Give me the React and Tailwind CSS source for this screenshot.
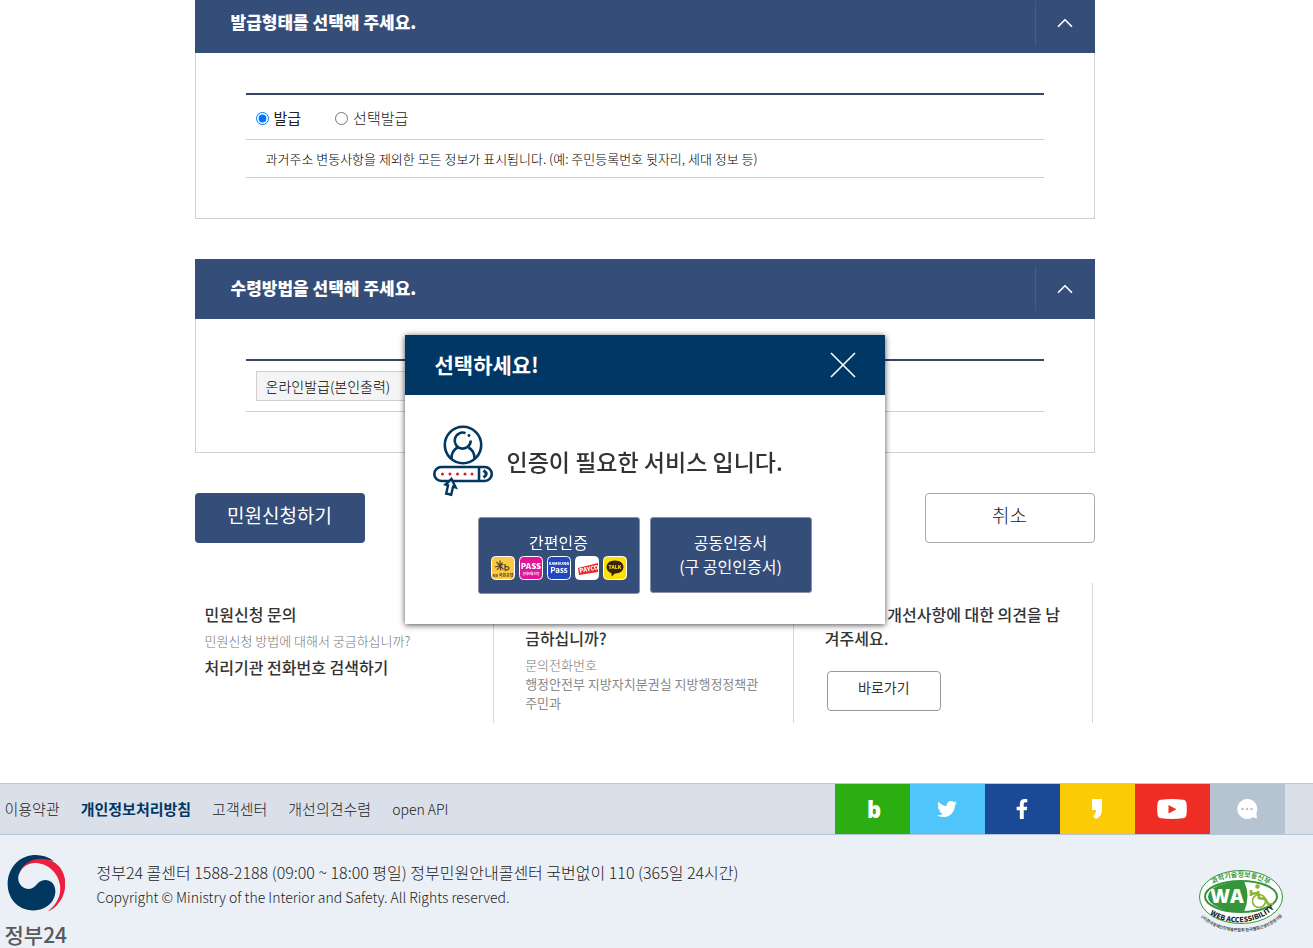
import React, { useState } from 'react';
import { FaTwitter, FaFacebookF } from 'react-icons/fa';
import { ChevronUp } from 'lucide-react';

const footerLinks = [
  { label: '이용약관' },
  { label: '개인정보처리방침', strong: true },
  { label: '고객센터' },
  { label: '개선의견수렴' },
  { label: 'open API', latin: true },
];

const StoryIcon = () => (
  <svg width="12" height="20" viewBox="0 0 12 20" fill="#fff" aria-hidden="true">
    <path d="M1 0h10v10c0 5-2 8-6 10l-3-3c2-1.500 3-3 3-6H1z" />
  </svg>
);

const YoutubeIcon = () => (
  <svg width="30" height="20" viewBox="0 0 30 20" aria-hidden="true">
    <path d="M4 .7Q15-.7 26 .7q3 .4 3.400 3.300.8 6 0 12-.4 2.900-3.400 3.300-11 1.400-22 0Q1 18.900.6 16q-.8-6 0-12Q1 1.100 4 .7z" fill="#fff" />
    <path d="M11.500 6v8.500l8-4.200z" fill="#ee2d24" />
  </svg>
);

const ChatIcon = () => (
  <svg width="22" height="20" viewBox="0 0 22 20" aria-hidden="true">
    <path d="M11 0a10 10 0 1 0 6 18.200l4 1.300-.6-5.500A10 10 0 0 0 11 0z" fill="#fff" />
    <g fill="#b6c3d0">
      <circle cx="6.500" cy="10" r="1.300" />
      <circle cx="11" cy="10" r="1.300" />
      <circle cx="15.500" cy="10" r="1.300" />
    </g>
  </svg>
);

const snsLinks = [
  { label: '블로그', color: 'bg-[#2bae12]', icon: <span className="pl-1 font-['Open_Sans',sans-serif] text-[22px] leading-6 font-extrabold">b</span> },
  { label: '트위터', color: 'bg-[#50c5fc]', icon: <FaTwitter size={20} /> },
  { label: '페이스북', color: 'bg-[#1b4996]', icon: <FaFacebookF size={20} /> },
  { label: '카카오스토리', color: 'bg-[#fdca08]', icon: <StoryIcon /> },
  { label: '유튜브', color: 'bg-[#ee2d24]', icon: <YoutubeIcon /> },
  { label: '채팅상담', color: 'bg-[#b6c3d0]', icon: <ChatIcon /> },
];

const AuthIcon = () => (
  <svg width="62" height="72" viewBox="1 0 62 72" fill="none" stroke="#02375f" strokeWidth="2.600" aria-hidden="true">
    <circle cx="31" cy="20" r="18.200" />
    <path d="M38.700 15.500A8 8 0 1 1 33.500 8.100" />
    <circle cx="37" cy="10.500" r="1.400" fill="#02375f" stroke="none" />
    <path d="M19.500 34c0-6 2-9.500 6-11.500M42.500 34c0-6-2-9.500-6-11.500" />
    <rect x="2.300" y="42" width="57.500" height="14" rx="7" />
    <path d="M47 42v14" />
    <path d="M51.500 45.500q5.500 3.500 0 7" strokeWidth="3" />
    <g fill="#d8163f" stroke="none">
      <circle cx="10.500" cy="49" r="1.500" />
      <circle cx="18" cy="49" r="1.500" />
      <circle cx="25.500" cy="49" r="1.500" />
      <circle cx="33" cy="49" r="1.500" />
      <circle cx="40" cy="49" r="1.500" />
    </g>
    <path d="M19.500 54l-6 5.500 2.500.8-1.800 8.200 5 1.200 1.800-8 2.700.8z" fill="#fff" strokeWidth="2.400" />
  </svg>
);

const PayIcons = () => (
  <svg className="mt-0.5" width="136" height="24" viewBox="0 0 136 24" fontFamily="'Noto Sans CJK KR', sans-serif" aria-hidden="true">
    <g stroke="#fff">
      <rect x=".5" y=".5" width="23" height="23" rx="4" fill="#fbc944" />
      <rect x="28.500" y=".5" width="23" height="23" rx="4" fill="#e0169a" />
      <rect x="56.500" y=".5" width="23" height="23" rx="4" fill="#2048c0" />
      <rect x="84.500" y=".5" width="23" height="23" rx="4" fill="#fff" />
      <rect x="112.500" y=".5" width="23" height="23" rx="4" fill="#fbe104" />
    </g>
    <path d="M9 4.500l.5 10M5.500 6l7 7.500M4 11l8.500-2.500M6 14l5.500-7.500M14 8v6.500M14 11c5-2 5.500 3.500 0 3" fill="none" stroke="#51432b" strokeWidth="1.200" />
    <text x="12" y="21" fontSize="4" fontWeight="700" fill="#51432b" textAnchor="middle">KB 국민은행</text>
    <text x="40" y="13" fontSize="8" fontWeight="900" fill="#fff" textAnchor="middle">PASS</text>
    <text x="40" y="19" fontSize="3" fontWeight="700" fill="#fff" textAnchor="middle">휴대전화 인증</text>
    <text x="68" y="9" fontSize="4" fontWeight="900" fill="#fff" textAnchor="middle">SAMSUNG</text>
    <text x="68" y="17" fontSize="8" fontWeight="700" fill="#fff" textAnchor="middle">Pass</text>
    <path d="M87 12l20-5v9l-19 3z" fill="#ed2a2b" />
    <text x="98" y="15" fontSize="6" fontWeight="900" fill="#fff" textAnchor="middle" transform="rotate(-11 98 13)">PAYCO</text>
    <path d="M124 4.500c5 0 8.500 2.800 8.500 6.500s-3.500 6.500-8.500 6.500l-3.500 3v-3.300c-3-1-5-3.200-5-6.200 0-3.700 3.500-6.500 8.500-6.500z" fill="#38200e" />
    <text x="124" y="13" fontSize="5" fontWeight="900" fill="#fbe104" textAnchor="middle">TALK</text>
  </svg>
);

const GovLogo = () => (
  <svg width="58" height="58" viewBox="0 0 58 58" aria-hidden="true">
    <path d="M47 7C36-1.500 19-1 9.500 8.500-2.500 20-2 40 9 50c11 10 30 8 37-4 5-9 2-20-8-20-8 0-9 9-16 9S9 28 12 20C16 9 30 3 47 7z" fill="#02375f" />
    <path d="M11.500 22C14 8 30 2 42 6c16 5 20 24 13 38-4 7-9 12-14 13 8-5 13.500-15 12-26C51 18 40 9 28 9c-8 0-14.500 5-16.500 13z" fill="#ec1f3e" />
  </svg>
);

const WebMark = () => (
  <svg width="88" height="68" viewBox="0 0 88 68" fontFamily="'Noto Sans CJK KR', sans-serif" role="img" aria-label="웹 접근성 인증마크">
    <defs>
      <path id="waTop" d="M9 24C20 4 66 4 79 24" />
      <path id="waMid" d="M5 39C22 60 66 61 84 32" />
      <path id="waLow" d="M-1 43C16 70 72 71 90 42" />
    </defs>
    <ellipse cx="44" cy="29" rx="41.500" ry="26.500" fill="#fff" stroke="#33963c" />
    <ellipse cx="44" cy="28.500" rx="36" ry="15.500" fill="#fff" stroke="#33963c" strokeWidth="2" />
    <path d="M47 13A36 15.500 0 0 0 47 44Q54 28 47 13z" fill="#33963c" />
    <text x="30" y="35" fontSize="19" fontWeight="800" fill="#fff" textAnchor="middle" fontFamily="'Open Sans', sans-serif">WA</text>
    <g fill="none" stroke="#8ab82e" strokeWidth="1.600">
      <circle cx="62" cy="33" r="6.500" />
      <path d="M61 23l1 7 6 1 4 6 4-1M61 25l-8 1M54 22v6" strokeWidth="2.600" />
      <circle cx="60.500" cy="18.500" r="1.500" fill="#8ab82e" />
    </g>
    <text fontSize="7" fontWeight="700" fill="#33963c" textAnchor="middle">
      <textPath href="#waTop" startOffset="50%">과학기술정보통신부</textPath>
    </text>
    <text fontSize="7" fontWeight="900" fill="#222" textAnchor="middle">
      <textPath href="#waMid" startOffset="50%">WEB ACCESSIBILITY</textPath>
    </text>
    <text fontSize="4" fontWeight="700" fill="#444" textAnchor="middle">
      <textPath href="#waLow" startOffset="50%">(사)한국장애인단체총연합회 한국웹접근성인증평가원</textPath>
    </text>
  </svg>
);

const Panel = ({ title, children }) => (
  <section>
    <header className="flex h-15 items-center bg-[#344d79] pl-9 text-white">
      <h2 className="flex-1 pb-0.5 text-[17px] font-black">{title}</h2>
      <button type="button" aria-label="접기" className="flex h-11 w-15 items-center justify-center border-l border-[#465d86]">
        <ChevronUp size={26} strokeWidth={1.600} />
      </button>
    </header>
    <div className="border-x border-b border-[#d0d0d0] px-[50px] py-10">
      <div className="border-t-2 border-[#344566]">{children}</div>
    </div>
  </section>
);

const AuthDialog = ({ onClose }) => (
  <div className="pointer-events-none fixed inset-x-0 top-[335px] flex justify-center pr-6">
    <div role="dialog" aria-labelledby="auth-title" className="pointer-events-auto w-[480px] bg-white shadow-[0_1px_6px_rgba(0,0,0,0.7)]">
      <header className="flex h-15 items-center justify-between bg-[#003764] px-7 text-white">
        <h2 id="auth-title" className="pl-0.5 text-[21px] font-bold">선택하세요!</h2>
        <button type="button" aria-label="닫기" onClick={onClose}>
          <svg width="28" height="28" viewBox="0 0 28 28" stroke="#fff" strokeWidth="1.600" aria-hidden="true">
            <path d="M2 2l24 24M26 2L2 26" />
          </svg>
        </button>
      </header>
      <div className="flex items-center gap-3 px-7 pt-[30px]">
        <AuthIcon />
        <p className="text-[23px] font-medium text-[#333]">인증이 필요한 서비스 입니다.</p>
      </div>
      <div className="flex items-start justify-center gap-2.5 pt-5 pb-[30px] text-base leading-6 text-white">
        <button type="button" className="flex h-[77px] w-[162px] flex-col items-center rounded-[3px] border border-[#8a92a2] bg-[#344d79] pt-3">
          간편인증
          <PayIcons />
        </button>
        <button type="button" className="h-19 w-[162px] rounded-[3px] border border-[#8a92a2] bg-[#344d79] pb-0.5">
          공동인증서<br />(구 공인인증서)
        </button>
      </div>
    </div>
  </div>
);

const App = () => {
  const [issueType, setIssueType] = useState('all');
  const [dialogOpen, setDialogOpen] = useState(true);

  return (
    <div className="flex min-h-screen flex-col overflow-hidden bg-white font-['Noto_Sans_CJK_KR',sans-serif] text-[#222]">
      <main className="-mt-[7px] pr-6 pb-15">
        <div className="mx-auto flex max-w-[900px] flex-col gap-10">
          <Panel title="발급형태를 선택해 주세요.">
            <div className="flex h-[45px] items-center gap-[34px] border-b border-[#d0d0d0] px-2.5 pt-0.5 text-[15px]">
              <label className="flex items-center gap-[5px]">
                <input type="radio" name="issue" className="size-[13px]" checked={issueType === 'all'} onChange={() => setIssueType('all')} />
                <span>발급</span>
              </label>
              <label className="flex items-center gap-[5px] font-light">
                <input type="radio" name="issue" className="size-[13px]" checked={issueType === 'partial'} onChange={() => setIssueType('partial')} />
                선택발급
              </label>
            </div>
            <p className="flex h-[38px] items-center border-b border-[#d0d0d0] px-5 text-[13px] font-light text-black">
              과거주소 변동사항을 제외한 모든 정보가 표시됩니다. (예: 주민등록번호 뒷자리, 세대 정보 등)
            </p>
          </Panel>

          <Panel title="수령방법을 선택해 주세요.">
            <div className="flex h-[51px] items-center border-b border-[#d0d0d0] px-2.5">
              <select aria-label="수령방법" className="h-[30px] w-50 appearance-none border border-[#d0d0d0] bg-[#f4f4f4] px-[9px] text-sm font-light text-black">
                <option>온라인발급(본인출력)</option>
              </select>
            </div>
          </Panel>

          <div className="flex justify-between text-[19px]">
            <button type="button" onClick={() => setDialogOpen(true)} className="h-[50px] w-[170px] rounded bg-[#344d79] pb-1.5 text-white">민원신청하기</button>
            <button type="button" className="h-[50px] w-[170px] rounded border border-[#aaa] pb-1.5 font-light">취소</button>
          </div>

          <div className="mr-px grid h-35 grid-cols-3 text-[13px] leading-[19px] text-[#888]">
            <section className="border-r border-[#d8d8d8] pt-[19px] pl-2.5">
              <h3 className="text-base leading-6 font-medium text-[#333]">민원신청 문의</h3>
              <p className="py-[5px] font-light text-[#777]">민원신청 방법에 대해서 궁금하십니까?</p>
              <a href="#search" className="text-base font-medium text-[#333]">처리기관 전화번호 검색하기</a>
            </section>
            <section className="border-r border-[#d8d8d8] pt-[19px] pl-[31px]">
              <h3 className="pb-[5px] text-base leading-6 font-medium text-[#333]">민원서비스 내용에 대해서 궁<br />금하십니까?</h3>
              <p className="font-light text-[#777]">문의전화번호</p>
              <p>행정안전부 지방자치분권실 지방행정정책관<br />주민과</p>
            </section>
            <section className="border-r border-[#d8d8d8] pt-[19px] pl-[31px]">
              <h3 className="text-base leading-6 font-medium text-[#333]">홈페이지 개선사항에 대한 의견을 남<br />겨주세요.</h3>
              <button type="button" className="mt-[21px] ml-0.5 h-10 w-[114px] rounded border border-[#999] pb-2 text-sm text-[#333]">바로가기</button>
            </section>
          </div>
        </div>
      </main>

      <footer className="flex-1 bg-[#ebf0f7]">
        <div className="border-y border-[#b7c5d8] bg-[#dae0e9] pr-6">
          <div className="mx-auto flex h-[50px] max-w-[1280px] items-center justify-between">
            <nav className="flex items-center gap-[21px] text-[15px] font-light">
              {footerLinks.map(link => (
                <a
                  key={link.label}
                  href="#footer"
                  className={link.strong ? 'font-bold text-[#003764]' : link.latin ? 'text-sm' : ''}
                >
                  {link.label}
                </a>
              ))}
            </nav>
            <div className="flex h-full text-white">
              {snsLinks.map(sns => (
                <a key={sns.label} href="#sns" aria-label={sns.label} className={`flex w-[75px] items-center justify-center ${sns.color}`}>
                  {sns.icon}
                </a>
              ))}
            </div>
          </div>
        </div>
        <div className="pr-6">
          <div className="mx-auto flex max-w-[1280px] items-start pt-[19px]">
            <div className="flex w-[92px] flex-col items-start">
              <span className="pl-0.5"><GovLogo /></span>
              <span className="pt-1 text-[21px] leading-9 font-medium text-[#58595b]">정부24</span>
            </div>
            <div className="flex-1 pt-1.5 leading-[25px] font-light">
              <p className="text-base leading-[25px]">정부24 콜센터 1588-2188 (09:00 ~ 18:00 평일) 정부민원안내콜센터 국번없이 110 (365일 24시간)</p>
              <p className="text-sm leading-[25px]">Copyright © Ministry of the Interior and Safety. All Rights reserved.</p>
            </div>
            <div className="pt-3.5"><WebMark /></div>
          </div>
        </div>
      </footer>

      {dialogOpen && <AuthDialog onClose={() => setDialogOpen(false)} />}
    </div>
  );
};

export default App;
